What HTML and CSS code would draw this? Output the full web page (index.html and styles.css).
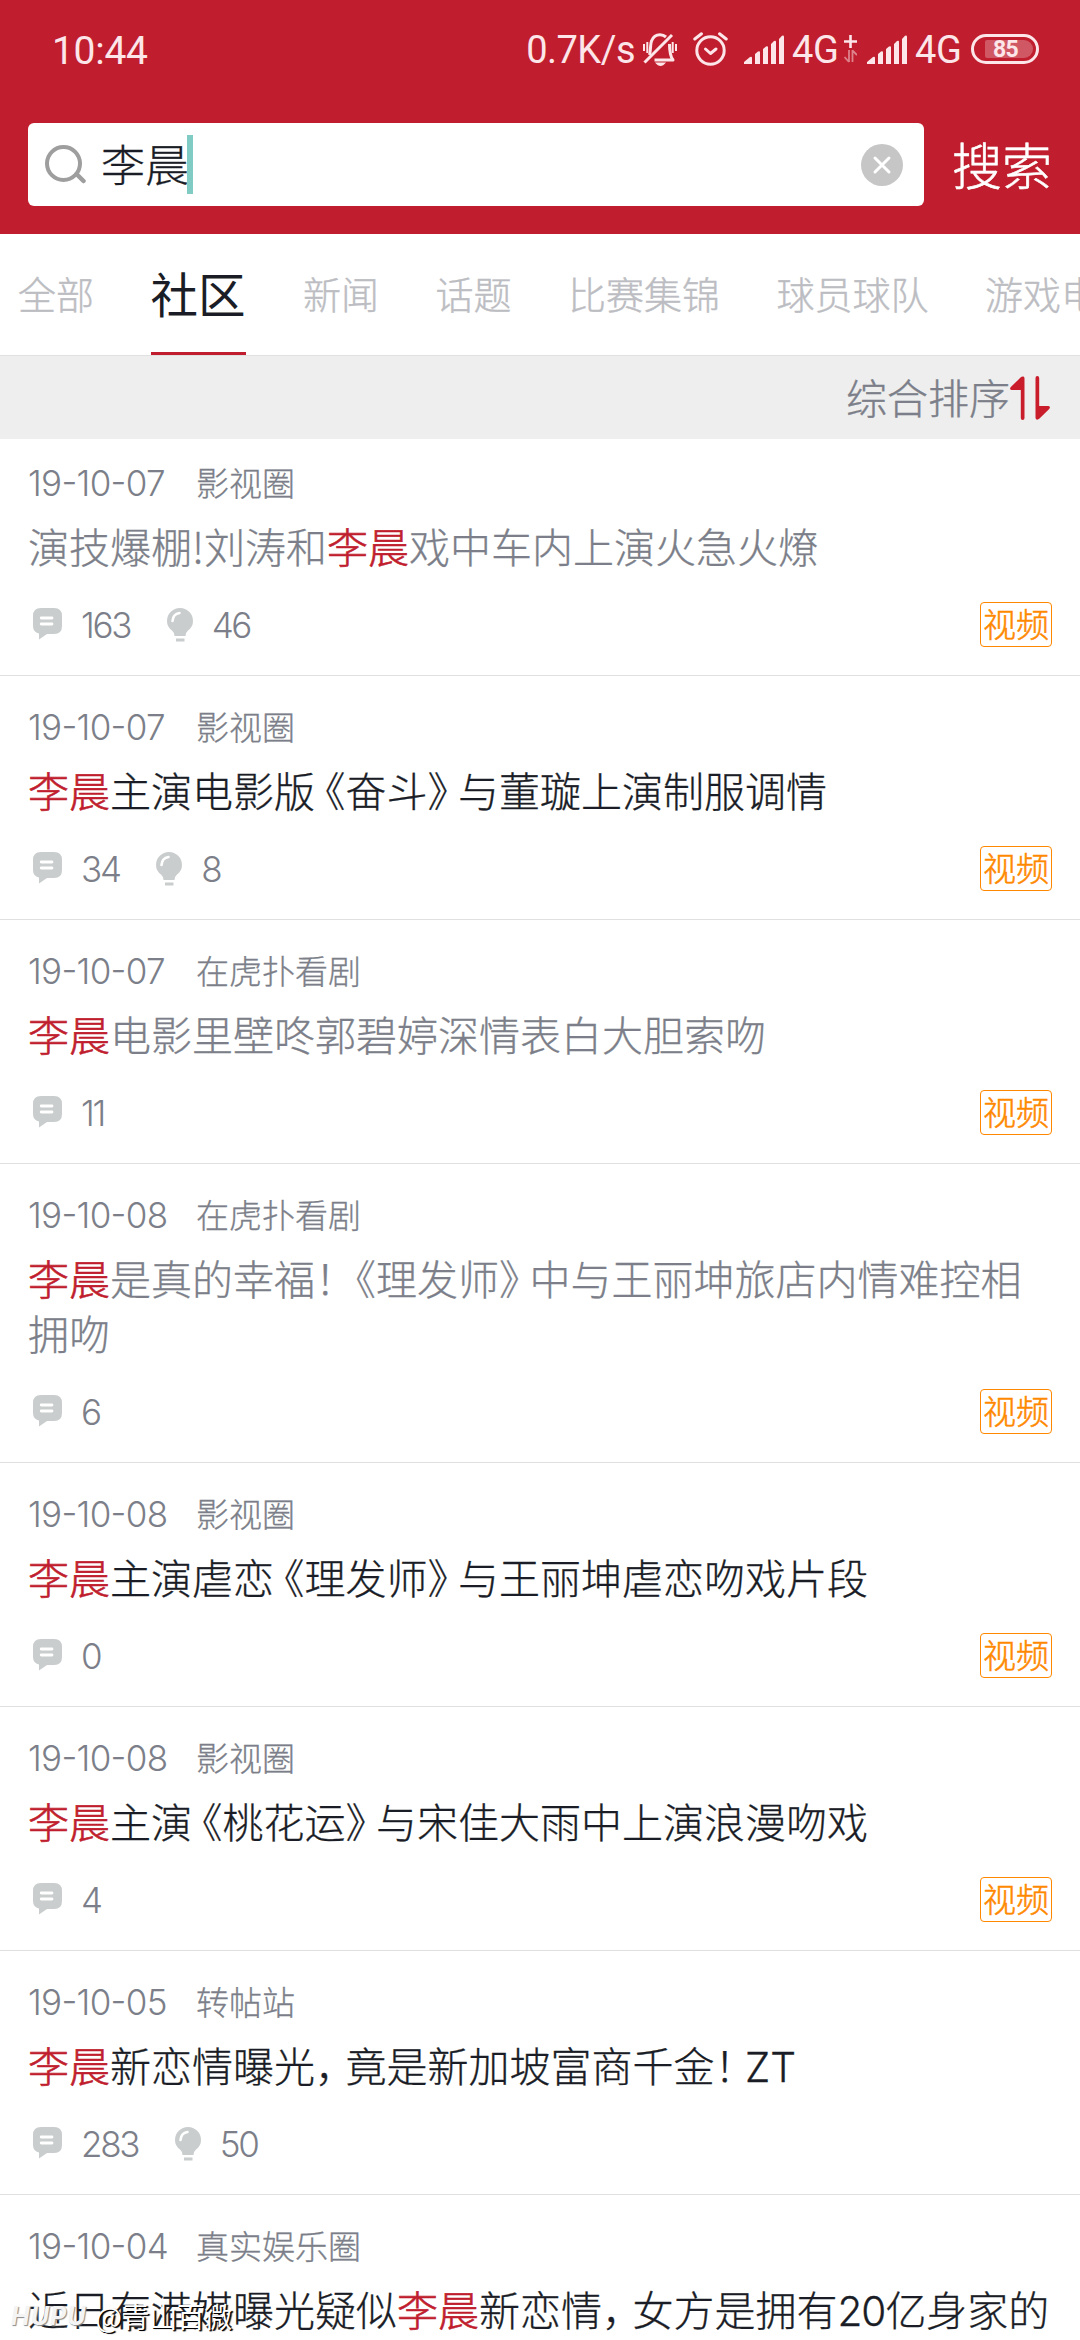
FILE: index.html
```html
<!DOCTYPE html>
<html lang="zh-CN">
<head>
<meta charset="utf-8">
<title>搜索</title>
<link rel="stylesheet" href="styles.css">
</head>
<body>
<svg class="defs" aria-hidden="true">
  <symbol id="comment" viewBox="0 0 29 32">
    <path fill="#c9cdcd" d="M8 0H21Q29 0 29 8V18Q29 26 21 26H14L6 31.5V25.6Q0 24 0 18V8Q0 0 8 0Z"/>
    <path stroke="#fff" stroke-width="2.8" stroke-linecap="round" d="M8.2 10H19M8.2 16H19"/>
  </symbol>
  <symbol id="bulb" viewBox="0 0 26 34">
    <path fill="#c9cdcd" d="M13 0A13 13 0 0 1 26 13Q26 19 21 22.500Q18.500 24.500 18.500 28H7.500Q7.500 24.500 5 22.500Q0 19 0 13A13 13 0 0 1 13 0ZM9 30.500H17.500V33.500H9Z"/>
    <path fill="none" stroke="#fff" stroke-width="2.600" stroke-linecap="round" d="M5.500 13Q6 6 12.500 5"/>
  </symbol>
  <symbol id="signal" viewBox="0 0 40 29">
    <path fill="#fce6e9" d="M0 29V27L6 22Q8 21 8 23V29ZM11 29V19L14 16.500Q16 15.500 16 17.500V29ZM19 29V14L22 11.500Q24 10.500 24 12.500V29ZM27 29V9L30 6Q32 5 32 7V29ZM35 29V4L38 .8Q40 0 40 2V29Z"/>
  </symbol>
</svg>

<header class="header">
  <div class="status">
    <span class="clock">10:44</span>
    <span class="speed">0.7K/s</span>
    <svg class="mute" viewBox="0 0 34 33" fill="none" stroke="#fce6e9" stroke-width="3">
      <path d="M6.500 22C8 17 7 12 8.500 8Q11 1.800 17 1.800Q20.500 1.800 23 4M26.500 11C26.500 18 27 23 30 27H11.500" stroke-linejoin="round"/>
      <path d="M1.500 29.500L29 2"/>
      <path stroke-width="2" d="M1 11V18M4.300 9V20M29.700 9V20M33 11V18"/>
      <path fill="#fce6e9" stroke="none" d="M12 29.500H23Q20 33 17.500 33Q15 33 12 29.500Z"/>
    </svg>
    <svg class="alarm" viewBox="0 0 35 34" fill="none" stroke="#fce6e9" stroke-width="3" stroke-linecap="round">
      <circle cx="17.500" cy="18.500" r="13.700"/>
      <path d="M12.500 17L17.500 21.500L23 17" stroke-linejoin="round"/>
      <path d="M1.800 7L8.500 1.800M33.200 7L26.500 1.800"/>
    </svg>
    <svg class="signal"><use href="#signal"/></svg>
    <span class="net">4G</span>
    <svg class="plus" viewBox="0 0 13 28" fill="none" stroke="#fce6e9">
      <path stroke-width="2.600" d="M6.500 0V13M0 6.500H13"/>
      <path stroke-width="1.800" opacity=".5" d="M5 15V27M.5 22L5 27M8.500 27V15M8.500 15.500L13 20"/>
    </svg>
    <svg class="signal"><use href="#signal"/></svg>
    <span class="net">4G</span>
    <span class="battery"><span class="level">85</span></span>
  </div>
  <div class="searchbar">
    <div class="field">
      <svg class="lens" viewBox="0 0 41 40" fill="none" stroke="#9e9e9e" stroke-width="4">
        <circle cx="18.500" cy="18.500" r="16.500"/>
        <path d="M31.500 29L38.500 36" stroke-linecap="round" stroke-width="4.500"/>
      </svg>
      <span class="query">李晨</span><i class="caret"></i>
      <svg class="clear" viewBox="0 0 42 42">
        <circle cx="21" cy="21" r="21" fill="#c6c6c6"/>
        <path d="M14 14L28 28M28 14L14 28" stroke="#fff" stroke-width="3" stroke-linecap="round"/>
      </svg>
    </div>
    <span class="submit">搜索</span>
  </div>
</header>

<nav class="tabs">
  <span class="tab">全部</span>
  <span class="tab active">社区</span>
  <span class="tab">新闻</span>
  <span class="tab">话题</span>
  <span class="tab">比赛集锦</span>
  <span class="tab">球员球队</span>
  <span class="tab">游戏电竞</span>
</nav>

<div class="sort">
  <span>综合排序</span>
  <svg class="sort-icon" viewBox="0 0 40 44" fill="#c91d2c">
    <path d="M10.500 1.500Q12 0 13.500 .5Q14.500 1 14.500 2.500V42Q14.500 44 12.700 44Q10.800 44 10.800 42V14H1.500Q-1 13.500 .8 11Z"/>
    <path d="M29.500 42.500Q28 44 26.500 43.500Q25.500 43 25.500 41.500V2Q25.500 0 27.300 0Q29.200 0 29.200 2V30H38.500Q41 30.500 39.200 33Z"/>
  </svg>
</div>

<main class="list">
  <article class="item read">
    <div class="meta"><span class="date">19-10-07</span><span>影视圈</span></div>
    <h2 class="title">演技爆棚!刘涛和<em>李晨</em>戏中车内上演火急火燎</h2>
    <div class="foot"><svg class="comment"><use href="#comment"/></svg><span class="num">163</span><svg class="bulb"><use href="#bulb"/></svg><span class="num">46</span><span class="tag">视频</span></div>
  </article>
  <article class="item">
    <div class="meta"><span class="date">19-10-07</span><span>影视圈</span></div>
    <h2 class="title"><em>李晨</em>主演电影版<span class="open">《</span>奋斗<span class="close">》</span>与董璇上演制服调情</h2>
    <div class="foot"><svg class="comment"><use href="#comment"/></svg><span class="num">34</span><svg class="bulb"><use href="#bulb"/></svg><span class="num">8</span><span class="tag">视频</span></div>
  </article>
  <article class="item read">
    <div class="meta"><span class="date">19-10-07</span><span>在虎扑看剧</span></div>
    <h2 class="title"><em>李晨</em>电影里壁咚郭碧婷深情表白大胆索吻</h2>
    <div class="foot"><svg class="comment"><use href="#comment"/></svg><span class="num">11</span><span class="tag">视频</span></div>
  </article>
  <article class="item read">
    <div class="meta"><span class="date">19-10-08</span><span>在虎扑看剧</span></div>
    <h2 class="title"><em>李晨</em>是真的幸福<span class="close">！</span><span class="open">《</span>理发师<span class="close">》</span>中与王丽坤旅店内情难控相拥吻</h2>
    <div class="foot"><svg class="comment"><use href="#comment"/></svg><span class="num">6</span><span class="tag">视频</span></div>
  </article>
  <article class="item">
    <div class="meta"><span class="date">19-10-08</span><span>影视圈</span></div>
    <h2 class="title"><em>李晨</em>主演虐恋<span class="open">《</span>理发师<span class="close">》</span>与王丽坤虐恋吻戏片段</h2>
    <div class="foot"><svg class="comment"><use href="#comment"/></svg><span class="num">0</span><span class="tag">视频</span></div>
  </article>
  <article class="item">
    <div class="meta"><span class="date">19-10-08</span><span>影视圈</span></div>
    <h2 class="title"><em>李晨</em>主演<span class="open">《</span>桃花运<span class="close">》</span>与宋佳大雨中上演浪漫吻戏</h2>
    <div class="foot"><svg class="comment"><use href="#comment"/></svg><span class="num">4</span><span class="tag">视频</span></div>
  </article>
  <article class="item">
    <div class="meta"><span class="date">19-10-05</span><span>转帖站</span></div>
    <h2 class="title"><em>李晨</em>新恋情曝光<span class="close">，</span>竟是新加坡富商千金<span class="close">！</span><span class="latin">ZT</span></h2>
    <div class="foot"><svg class="comment"><use href="#comment"/></svg><span class="num">283</span><svg class="bulb"><use href="#bulb"/></svg><span class="num">50</span></div>
  </article>
  <article class="item">
    <div class="meta"><span class="date">19-10-04</span><span>真实娱乐圈</span></div>
    <h2 class="title">近日有港媒曝光疑似<em>李晨</em>新恋情<span class="close">，</span>女方是拥有<span class="latin num20">20</span>亿身家的</h2>
  </article>
</main>

<div class="watermark"><b>HUPU</b><span>@青山百微</span></div>
</body>
</html>
```
FILE: styles.css
```css
* { box-sizing: border-box; }

body {
  margin: 0;
  width: 1080px;
  height: 2340px;
  overflow: hidden;
  position: relative;
  background: #fff;
  color: #1a1d26;
  font-family: "Noto Sans CJK SC", sans-serif;
  font-weight: 300;
  text-spacing-trim: space-all;
}

svg { display: block; flex: none; }
.defs { display: none; }

.header {
  height: 234px;
  background: #c01e2e;
  padding: 0 28px;
}

.status {
  height: 98px;
  padding: 0 13px 0 24px;
  display: flex;
  align-items: center;
  color: #fce6e9;
  font: 400 38px/1 Roboto, sans-serif;
}
.clock { font-size: 39px; margin-right: auto; padding-top: 4px; letter-spacing: -.3px; }
.speed { padding-top: 2px; margin-right: 8px; letter-spacing: -.5px; }
.mute { width: 34px; height: 33px; margin-right: 16px; }
.alarm { width: 35px; height: 34px; margin-right: 16px; }
.signal { width: 40px; height: 29px; margin-right: 8px; }
.net { width: 48px; padding-top: 2px; letter-spacing: -.3px; }
.plus { width: 13px; height: 28px; margin: 0 10px 0 4px; }
.battery {
  width: 68px;
  height: 30px;
  margin-left: 8px;
  padding: 3px 3px 3px 11px;
  border: 3px solid #fce6e9;
  border-radius: 15px;
}
.level {
  display: block;
  height: 18px;
  padding-left: 8px;
  border-radius: 2px 9px 9px 2px;
  background: rgba(255, 255, 255, .26);
  font: 700 23px/19px Roboto, sans-serif;
  letter-spacing: -.8px;
}

.searchbar {
  display: flex;
  align-items: center;
  padding-top: 25px;
}
.field {
  width: 896px;
  height: 83px;
  padding: 0 21px 0 17px;
  display: flex;
  align-items: center;
  background: #fff;
  border-radius: 6px;
}
.lens { width: 41px; height: 40px; margin-right: 15px; }
.query { font-size: 44px; line-height: 60px; padding-bottom: 3px; -webkit-text-stroke: .3px; }
.caret { width: 6px; height: 59px; background: #80cbc4; margin-left: -2px; }
.clear { width: 42px; height: 42px; margin-left: auto; }
.submit {
  margin-left: 28px;
  padding-bottom: 4px;
  color: #fff;
  font-size: 50px;
  line-height: 60px;
  white-space: nowrap;
  -webkit-text-stroke: .6px;
}

.tabs {
  height: 122px;
  padding-left: 18px;
  display: flex;
  gap: 56.500px;
  overflow: hidden;
  border-bottom: 1px solid #e0e0e0;
}
.tab {
  flex: none;
  height: 121px;
  font-size: 38px;
  line-height: 118px;
  color: #bcbdc2;
  -webkit-text-stroke: .4px;
}
.tab.active {
  font-size: 47.500px;
  font-weight: 400;
  color: #1a1d26;
  border-bottom: 3px solid #c01e2e;
  margin-right: 1px;
  -webkit-text-stroke: 0;
}

.sort {
  height: 83px;
  padding: 0 30px 0 0;
  display: flex;
  justify-content: flex-end;
  align-items: center;
  background: #eee;
  color: #7c7f89;
  font-size: 41px;
  line-height: 60px;
  -webkit-text-stroke: .4px;
}
.sort span { padding-bottom: 3px; }
.sort-icon { width: 40px; height: 44px; -webkit-text-stroke: 0; }

.item {
  padding: 33px 28px 28px 28px;
  border-bottom: 1px solid #e0e0e0;
}
.item:first-child { padding-top: 26px; }

.meta {
  height: 37px;
  display: flex;
  align-items: center;
  color: #7c7f89;
  font-size: 33px;
  line-height: 35px;
  -webkit-text-stroke: .3px;
}
.meta span + span { padding-bottom: 2px; }
.date {
  width: 168px;
  font: 300 35px/37px Inter, sans-serif;
  font-feature-settings: "case" 1;
  letter-spacing: -.7px;
  -webkit-text-stroke: 0;
}

.title {
  margin: 16px 0 29px;
  font-size: 41px;
  font-weight: 300;
  line-height: 55px;
  -webkit-text-stroke: .3px;
}
.read .title { color: #7c7f89; }
.title em { font-style: normal; color: #c01e2e; -webkit-text-stroke: .6px; }
.open { margin-left: -10.500px; }
.close { letter-spacing: -10.500px; }
.latin { font: 300 40.500px/1 Inter, sans-serif; }
.num20 { letter-spacing: -1px; }

.foot {
  height: 45px;
  display: flex;
  align-items: center;
  padding-left: 5px;
  color: #7c7f89;
}
.comment { width: 29px; height: 32px; margin: -2px 19px 0 0; }
.bulb { width: 26px; height: 34px; margin: 0 19px 0 36.500px; }
.num { padding-top: 2px; font: 300 35px/45px Inter, sans-serif; letter-spacing: -2.300px; }
.tag {
  width: 72px;
  height: 45px;
  margin-left: auto;
  border: 1px solid #ff8800;
  border-radius: 4px;
  color: #ff8800;
  font-size: 33px;
  line-height: 41px;
  text-align: center;
  -webkit-text-stroke: .5px;
}

/* Floats over the last row of the list */
.watermark {
  position: absolute;
  left: 11px;
  bottom: 8px;
  display: flex;
  align-items: center;
  gap: 9px;
  color: #fff;
  font-size: 28px;
  line-height: 32px;
}
.watermark b {
  color: #f4f4f4;
  font: italic 700 25px/32px Inter, sans-serif;
  letter-spacing: 1px;
  text-shadow: 1px 1px 1px #888;
}
.watermark span {
  font-weight: 400;
  letter-spacing: -.4px;
  text-shadow: 1px 1px 0 #000, 2px 1px 1px #222;
}
```
